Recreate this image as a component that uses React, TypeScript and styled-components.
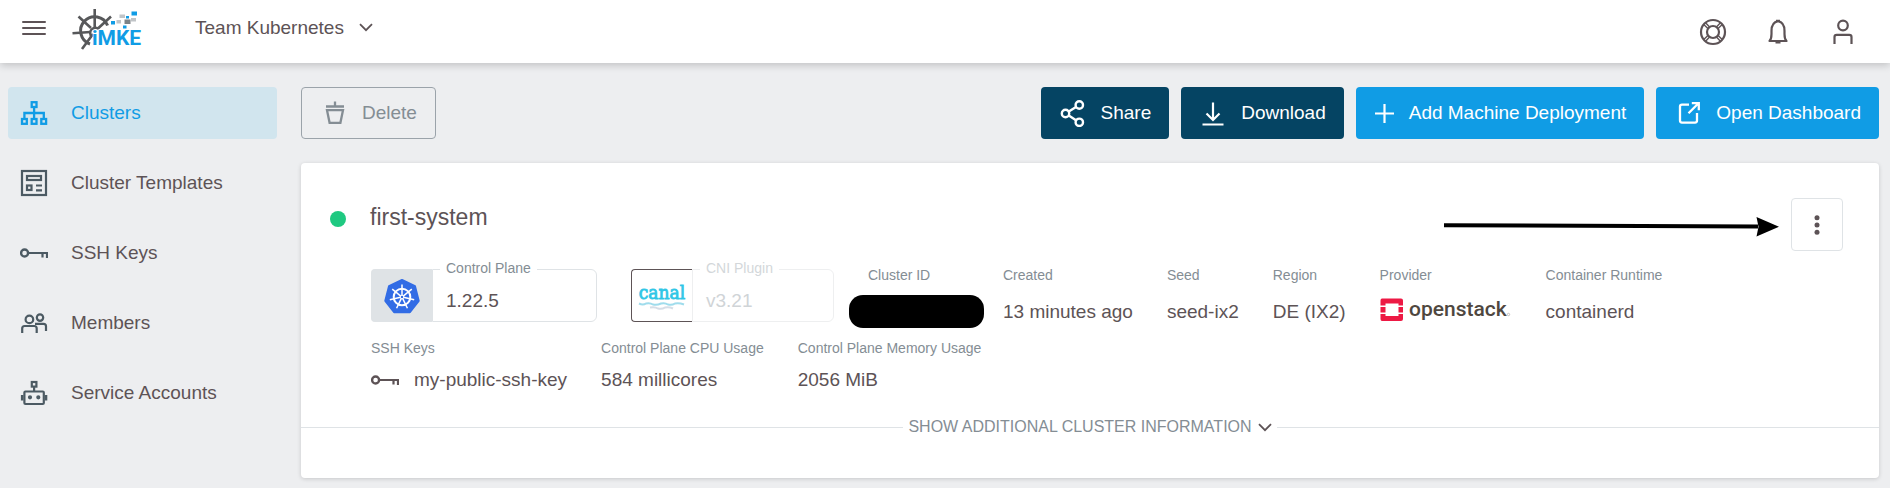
import React from 'react';
import styled, { createGlobalStyle, css } from 'styled-components';

const color = {
  page: '#edeef0',
  text: '#5d5356',
  muted: '#848d94',
  icon: '#4c5a63',
  border: '#dfe3e6',
  primary: '#109ce5',
  secondary: '#054463',
  active: '#d1e5ee',
  green: '#1fc981',
};

const GlobalStyle = createGlobalStyle`
  *, *::before, *::after { box-sizing: border-box; }
  body {
    margin: 0;
    min-height: 100vh;
    background: ${color.page};
    color: ${color.text};
    font-family: "Liberation Sans", Arial, sans-serif;
    font-size: 19px;
    line-height: 24px;
  }
  button { font: inherit; color: inherit; cursor: pointer; }
  svg { display: block; flex: none; }
`;

const Header = styled.header`
  position: relative;
  display: flex;
  justify-content: space-between;
  height: 63px;
  padding: 0 32px 0 20px;
  background: #fff;
  box-shadow: 0 2px 8px rgba(0, 0, 0, 0.2);
`;

const HeaderStart = styled.div`
  display: flex;
  align-items: center;
  height: 55px;
`;

const HeaderEnd = styled.div`
  display: flex;
  align-items: center;
  gap: 35px;
`;

const PlainButton = styled.button`
  display: flex;
  align-items: center;
  padding: 0;
  border: 0;
  background: none;
`;

const Brand = styled.a`
  display: block;
  margin: 4px 51px 0 24px;
`;

const TeamButton = styled(PlainButton)`
  gap: 15px;
  height: 44px;
`;

const Body = styled.div`
  display: flex;
  gap: 24px;
  padding: 24px 11px 10px 8px;
`;

const Nav = styled.nav`
  display: flex;
  flex: none;
  flex-direction: column;
  gap: 18px;
  width: 269px;
`;

const NavLink = styled.a<{ $active?: boolean }>`
  display: flex;
  align-items: center;
  gap: 23px;
  height: 52px;
  padding: 0 12px;
  border-radius: 4px;
  color: ${color.text};
  text-decoration: none;
  svg { color: ${color.icon}; }
  ${(p) =>
    p.$active &&
    css`
      background: ${color.active};
      color: ${color.primary};
      svg { color: ${color.primary}; }
    `}
`;

const Main = styled.main`
  flex: 1;
  min-width: 0;
`;

const Toolbar = styled.div`
  display: flex;
  justify-content: space-between;
  margin-bottom: 24px;
`;

const Actions = styled.div`
  display: flex;
  gap: 12px;
`;

const tones = {
  outline: css`
    border: 1px solid #9ba3aa;
    background: transparent;
    color: ${color.muted};
  `,
  dark: css`
    border: 0;
    background: ${color.secondary};
    color: #fff;
  `,
  blue: css`
    border: 0;
    background: ${color.primary};
    color: #fff;
  `,
};

const ActionButton = styled.button<{ $tone: keyof typeof tones }>`
  display: flex;
  align-items: center;
  gap: 14px;
  height: 52px;
  padding: 0 18px;
  border-radius: 4px;
  white-space: nowrap;
  ${(p) => tones[p.$tone]}
`;

const Card = styled.section`
  padding-top: 35px;
  border-radius: 4px;
  background: #fff;
  box-shadow: 0 1px 4px rgba(0, 0, 0, 0.16);
`;

const CardHead = styled.div`
  display: flex;
  align-items: center;
  gap: 12px;
  padding: 0 36px 0 29px;
`;

const ClusterName = styled.div`
  display: flex;
  flex: 1;
  align-items: center;
  align-self: flex-start;
  gap: 24px;
  height: 42px;
`;

const StatusDot = styled.span`
  width: 16px;
  height: 16px;
  border-radius: 50%;
  background: ${color.green};
`;

const Title = styled.h1`
  margin: 0;
  padding-bottom: 4px;
  font-size: 23px;
  font-weight: 400;
  line-height: 28px;
`;

const MenuButton = styled.button`
  display: flex;
  align-items: center;
  justify-content: center;
  width: 52px;
  height: 53px;
  padding: 0;
  border: 1px solid ${color.border};
  border-radius: 4px;
  background: #fff;
`;

const Facts = styled.div`
  display: flex;
  gap: 34px;
  padding: 0 36px 0 70px;
`;

const VersionRow = styled(Facts)`
  margin-top: 10px;
`;

const UsageRow = styled(Facts)`
  margin-top: 6px;
`;

const Version = styled.div<{ $faded?: boolean }>`
  display: flex;
  align-items: flex-end;
  height: 61px;
  --line: ${(p) => (p.$faded ? '#eeeff0' : color.border)};
  --label: ${(p) => (p.$faded ? '#d3d7da' : color.muted)};
  --value: ${(p) => (p.$faded ? '#d0d4d7' : color.text)};
`;

const VersionLogo = styled.div<{ $outlined?: boolean }>`
  display: flex;
  align-items: center;
  justify-content: center;
  width: 61px;
  height: 53px;
  border: 1px solid ${(p) => (p.$outlined ? color.text : color.border)};
  border-right: 0;
  border-radius: 4px 0 0 4px;
  background: ${(p) => (p.$outlined ? '#fff' : color.border)};
`;

const VersionField = styled.fieldset<{ $wide?: boolean }>`
  width: ${(p) => (p.$wide ? 165 : 142)}px;
  height: 61px;
  margin: 0;
  padding: 12px 13px 0;
  border: 1px solid var(--line);
  border-radius: 0 6px 6px 0;
  color: var(--value);
  legend {
    margin-left: -6px;
    padding: 0 6px 2px;
    color: var(--label);
    font-size: 14px;
    line-height: 14px;
  }
`;

const Fact = styled.div<{ $compact?: boolean }>`
  display: flex;
  flex-direction: column;
  gap: ${(p) => (p.$compact ? 12 : 17)}px;
  padding-top: 6px;
  white-space: nowrap;
`;

const Label = styled.span`
  color: ${color.muted};
  font-size: 14px;
  line-height: 16px;
`;

const Value = styled.span`
  display: flex;
  align-items: center;
  gap: 15px;
  height: 24px;
`;

const IdFact = styled(Fact)`
  gap: 12px;
  width: 101px;
`;

const Redacted = styled.span`
  width: 135px;
  height: 33px;
  margin-left: -19px;
  border-radius: 14px;
  background: #000;
`;

const Expander = styled.div`
  display: flex;
  align-items: center;
  gap: 5px;
  margin-top: 23px;
  padding-bottom: 39px;
  &::before,
  &::after {
    content: '';
    flex: 1;
    height: 1px;
    background: ${color.border};
  }
`;

const ExpandButton = styled(PlainButton)`
  gap: 6px;
  color: ${color.muted};
  font-size: 16px;
  svg { color: ${color.text}; }
`;

type IconProps = { children: React.ReactNode; w?: number; h?: number; sw?: number };

const Icon = ({ children, w = 28, h = 28, sw = 2.2 }: IconProps) => (
  <svg width={w} height={h} viewBox={`0 0 ${w} ${h}`} fill="none" stroke="currentColor" strokeWidth={sw} aria-hidden="true">
    {children}
  </svg>
);

const Chevron = () => (
  <Icon w={14} h={9} sw={1.8}>
    <path d="M1 1.2 7 7.2 13 1.2" />
  </Icon>
);

const ClustersIcon = () => (
  <Icon sw={2.3}>
    <rect x="11.7" y="3.2" width="4.8" height="4.8" />
    <rect x="2" y="20" width="4.8" height="4.8" />
    <rect x="11.7" y="20" width="4.8" height="4.8" />
    <rect x="21.3" y="20" width="4.8" height="4.8" />
    <path d="M14.1 8v12M4.4 20v-6h19.4v6" />
  </Icon>
);

const TemplatesIcon = () => (
  <Icon>
    <rect x="2" y="2" width="24" height="24" />
    <rect x="7" y="7" width="14" height="4" />
    <rect x="7" y="16.5" width="4.5" height="4.5" />
    <path d="M16 16.5h6M16 21.3h6" />
  </Icon>
);

const KeyIcon = () => (
  <Icon h={12}>
    <circle cx="4.6" cy="6" r="3.5" strokeWidth="2.4" />
    <path d="M8 6h19v5M22.5 6v4.5" />
  </Icon>
);

const MembersIcon = () => (
  <Icon>
    <circle cx="9.4" cy="10.4" r="3.8" />
    <circle cx="20" cy="8.6" r="3.2" />
    <path d="M2.2 24v-4.5q0-2.5 2.5-2.5h9.5q2.5 0 2.5 2.5V24M15 14.8h8.5q2.5 0 2.5 2.5V22" />
  </Icon>
);

const RobotIcon = () => (
  <Icon>
    <rect x="11.8" y="3" width="4.6" height="4.6" />
    <path d="M14.1 7.5v5" />
    <rect x="4.4" y="12.5" width="19.4" height="12.5" rx="1" />
    <path d="M2.2 16v5.5M26 16v5.5" strokeWidth="2.6" />
    <circle cx="10" cy="18.3" r="1" />
    <circle cx="18.3" cy="18.3" r="1" />
  </Icon>
);

const BucketIcon = () => (
  <Icon sw={2.3}>
    <path d="M15 2.5v5M6 7.5h18M7 11.2h16l-2.6 12.6h-10.8z" />
  </Icon>
);

const ShareIcon = () => (
  <Icon sw={2.4}>
    <circle cx="6.5" cy="14.5" r="3.7" />
    <circle cx="20.3" cy="6" r="3.7" />
    <circle cx="20.3" cy="23.3" r="3.7" />
    <path d="M9.8 12.5 17 8M9.8 16.5l7.2 4.7" />
  </Icon>
);

const DownloadIcon = () => (
  <Icon sw={2.2}>
    <path d="M14 3.5v17.5M7.5 14.5 14 21l6.5-6.5M3.5 25.5h21" />
  </Icon>
);

const PlusIcon = () => (
  <Icon w={21}>
    <path d="M10.5 5v19M1 14.5h19" />
  </Icon>
);

const ExternalIcon = () => (
  <Icon sw={2.3}>
    <path d="M15 5.6H8q-2 0-2 2v14q0 2 2 2h13q2 0 2-2V14M14.5 14.2 24 4.7M17.8 4.2h7v7" />
  </Icon>
);

const LifebuoyIcon = () => (
  <Icon w={30} h={30}>
    <circle cx="15" cy="15" r="12" />
    <circle cx="15" cy="15" r="6" />
    <path
      d="m6 7.8 4.2 4M7.8 6l4 4.2M24 7.8l-4.2 4M22.2 6l-4 4.2M6 22.2l4.2-4M7.8 24l4-4.2M24 22.2l-4.2-4M22.2 24l-4-4.2"
      strokeWidth="1.4"
    />
  </Icon>
);

const BellIcon = () => (
  <Icon w={30} h={30}>
    <path d="M6.5 24q2-2 2-7v-3q0-8.500 6.500-9.800 6.500 1.300 6.500 9.800v3q0 5 2 7z" strokeLinejoin="round" />
    <path d="M13 3.8h4M12.5 25.3h5" />
  </Icon>
);

const UserIcon = () => (
  <Icon w={30} h={30}>
    <circle cx="15" cy="8.5" r="4.8" />
    <path d="M6.5 27v-7q0-2.2 2.2-2.2h12.6q2.2 0 2.2 2.2v7" />
  </Icon>
);

const BrandLogo = () => (
  <svg width="72" height="43" viewBox="0 0 72 43" role="img" aria-label="iMKE">
    <g fill="none" stroke="#57585a">
      <path d="M18 36A14 14 0 1 1 35.6 17.5" strokeWidth="3" />
      <path d="M20 29a5 5 0 1 1 7-8" strokeWidth="2.5" />
      <path d="M22.7 1v18M6.5 8.5l12.5 11.5M39 8.5 26.5 20M.5 25.2l18-1.2M10 41l11-15" strokeWidth="2.6" />
    </g>
    <g fill={color.primary}>
      <path d="M39 13h4v3.5h-4zM54 8h3v2.5h-3zM59.5 3.5h5.5v4h-5.5zM51 17.5h3.5v3H51z" />
      <text
        x="20"
        y="37"
        fontFamily="Roboto, Liberation Sans, sans-serif"
        fontSize="21"
        fontWeight="700"
        stroke="#fff"
        strokeWidth="1"
        paintOrder="stroke"
      >
        iMKE
      </text>
    </g>
    <path d="M47.5 6.5h5.5v3.5h-5.5zM44.5 12h4.5v3.5h-4.5zM59 10h5v3.5h-5z" fill="#c0c4c7" />
    <path d="M52.5 11.5h6v4.5h-6z" fill="#7c8286" />
  </svg>
);

const spokes = [0, 1, 2, 3, 4, 5, 6].map((n) => (n * 360) / 7);

const KubernetesLogo = () => (
  <svg width="38" height="36" viewBox="0 0 38 36" role="img" aria-label="Kubernetes">
    <path
      d="M19 2 32 8.2 35.7 22.8 26.9 34.2H11.1L2.3 22.8 6 8.2z"
      fill="#326ce5"
      stroke="#326ce5"
      strokeWidth="2"
      strokeLinejoin="round"
    />
    <g fill="none" stroke="#fff">
      <circle cx="19" cy="19" r="8.3" strokeWidth="2" />
      {spokes.map((angle) => (
        <path key={angle} d="M19 17.5V6.5" strokeWidth="1.5" transform={`rotate(${angle} 19 19)`} />
      ))}
      <circle cx="19" cy="19" r="1.8" strokeWidth="1" />
    </g>
  </svg>
);

const CanalLogo = () => (
  <svg width="50" height="34" viewBox="0 0 50 34" role="img" aria-label="canal">
    <text
      x="25"
      y="20"
      textAnchor="middle"
      fontFamily="'DejaVu Serif Condensed', 'DejaVu Serif', serif"
      fontSize="19"
      fill="#2fc6e6"
      stroke="#2fc6e6"
      strokeWidth=".8"
    >
      canal
    </text>
    <g fill="none" strokeWidth="2">
      <path d="M2 24.5q4 2 7 0 4-1 7 1 4 1 8-1 4-1 7 1 4 1 7-1 4-1 9 1" stroke="#9fdcec" />
      <path d="M13 28.5q5-1 8 1 4 1 7-1 4-1 8 1" stroke="#d5dde6" />
    </g>
  </svg>
);

const OpenstackLogo = () => (
  <svg width="132" height="28" viewBox="0 0 132 28" role="img" aria-label="openstack">
    <path
      d="M2 .5h19q2 0 2 2v5h-4.500v-2h-13v2H.5v-5q0-2 1.500-2zM.5 9h5v5.500h-5zM18.500 9H23v5.500h-4.500zM.5 16h5v2h13v-2H23v5q0 2-2 2H2q-1.500 0-1.500-2z"
      fill="#ed1944"
    />
    <text x="29" y="18" fontFamily="Roboto, sans-serif" fontSize="21" fontWeight="500" fill="#4f4740">
      openstack
    </text>
    <circle cx="128.5" cy="16.5" r="1.2" fill="none" stroke="#b0aaa6" strokeWidth=".7" />
  </svg>
);

const Arrow = () => (
  <svg width="335" height="24" viewBox="0 0 335 24" aria-hidden="true">
    <path d="M0 12.2 314 13.5" stroke="#000" strokeWidth="4" />
    <path d="M312.5 4 335 13.8l-22.5 9.7 2-9.7z" />
  </svg>
);

const DotsIcon = () => (
  <svg width="6" height="20" viewBox="0 0 6 20" fill="currentColor" aria-hidden="true">
    <circle cx="3" cy="2.8" r="2.5" />
    <circle cx="3" cy="10" r="2.5" />
    <circle cx="3" cy="17.2" r="2.5" />
  </svg>
);

const navItems = [
  { label: 'Clusters', icon: <ClustersIcon />, active: true },
  { label: 'Cluster Templates', icon: <TemplatesIcon /> },
  { label: 'SSH Keys', icon: <KeyIcon /> },
  { label: 'Members', icon: <MembersIcon /> },
  { label: 'Service Accounts', icon: <RobotIcon /> },
];

const placement = [
  { label: 'Created', value: '13 minutes ago' },
  { label: 'Seed', value: 'seed-ix2' },
  { label: 'Region', value: 'DE (IX2)' },
  { label: 'Provider', value: <OpenstackLogo /> },
  { label: 'Container Runtime', value: 'containerd' },
];

const usage = [
  { label: 'SSH Keys', value: 'my-public-ssh-key', icon: <KeyIcon /> },
  { label: 'Control Plane CPU Usage', value: '584 millicores' },
  { label: 'Control Plane Memory Usage', value: '2056 MiB' },
];

export default function App() {
  return (
    <>
      <GlobalStyle />
      <Header>
        <HeaderStart>
          <PlainButton aria-label="Toggle navigation">
            <Icon sw={2}>
              <path d="M3 8h22M3 14h22M3 20h22" strokeLinecap="round" />
            </Icon>
          </PlainButton>
          <Brand href="#" aria-label="iMKE home">
            <BrandLogo />
          </Brand>
          <TeamButton aria-haspopup="listbox">
            Team Kubernetes
            <Chevron />
          </TeamButton>
        </HeaderStart>
        <HeaderEnd>
          <PlainButton aria-label="Help"><LifebuoyIcon /></PlainButton>
          <PlainButton aria-label="Notifications"><BellIcon /></PlainButton>
          <PlainButton aria-label="Account"><UserIcon /></PlainButton>
        </HeaderEnd>
      </Header>
      <Body>
        <Nav>
          {navItems.map((item) => (
            <NavLink key={item.label} href="#" $active={item.active} aria-current={item.active ? 'page' : undefined}>
              {item.icon}
              {item.label}
            </NavLink>
          ))}
        </Nav>
        <Main>
          <Toolbar>
            <ActionButton $tone="outline"><BucketIcon />Delete</ActionButton>
            <Actions>
              <ActionButton $tone="dark"><ShareIcon />Share</ActionButton>
              <ActionButton $tone="dark"><DownloadIcon />Download</ActionButton>
              <ActionButton $tone="blue"><PlusIcon />Add Machine Deployment</ActionButton>
              <ActionButton $tone="blue"><ExternalIcon />Open Dashboard</ActionButton>
            </Actions>
          </Toolbar>
          <Card>
            <CardHead>
              <ClusterName>
                <StatusDot />
                <Title>first-system</Title>
              </ClusterName>
              <Arrow />
              <MenuButton aria-label="More actions"><DotsIcon /></MenuButton>
            </CardHead>
            <VersionRow>
              <Version>
                <VersionLogo><KubernetesLogo /></VersionLogo>
                <VersionField $wide>
                  <legend>Control Plane</legend>
                  1.22.5
                </VersionField>
              </Version>
              <Version $faded>
                <VersionLogo $outlined><CanalLogo /></VersionLogo>
                <VersionField>
                  <legend>CNI Plugin</legend>
                  v3.21
                </VersionField>
              </Version>
              <IdFact>
                <Label>Cluster ID</Label>
                <Redacted />
              </IdFact>
              {placement.map((fact) => (
                <Fact key={fact.label}>
                  <Label>{fact.label}</Label>
                  <Value>{fact.value}</Value>
                </Fact>
              ))}
            </VersionRow>
            <UsageRow>
              {usage.map((fact) => (
                <Fact key={fact.label} $compact>
                  <Label>{fact.label}</Label>
                  <Value>
                    {fact.icon}
                    {fact.value}
                  </Value>
                </Fact>
              ))}
            </UsageRow>
            <Expander>
              <ExpandButton aria-expanded="false">
                SHOW ADDITIONAL CLUSTER INFORMATION
                <Chevron />
              </ExpandButton>
            </Expander>
          </Card>
        </Main>
      </Body>
    </>
  );
}
